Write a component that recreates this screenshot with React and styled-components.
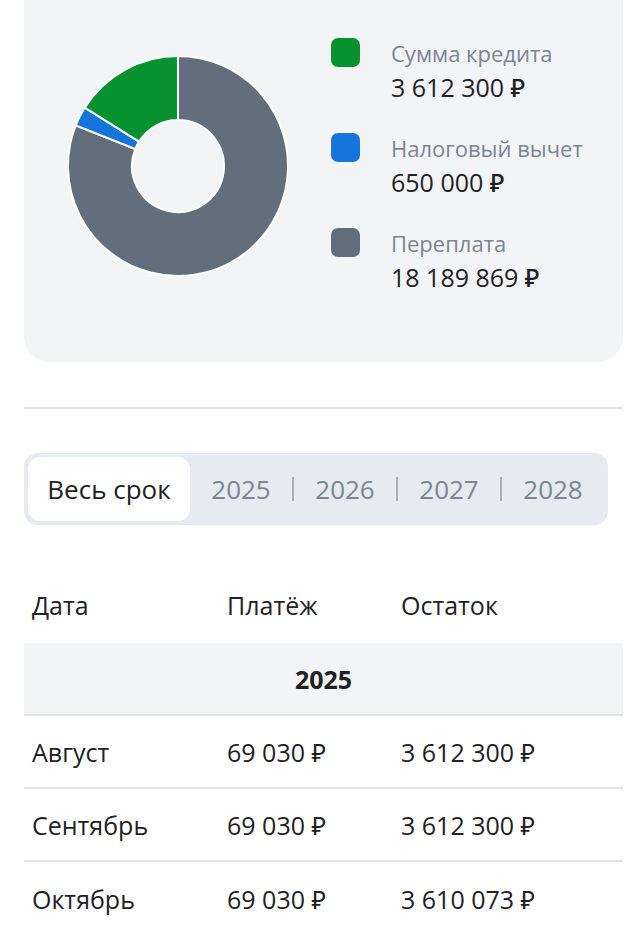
import React from "react";
import styled, { createGlobalStyle } from "styled-components";

const GlobalStyle = createGlobalStyle`
  html, body {
    margin: 0;
    padding: 0;
    background: #ffffff;
    font-family: "Open Sans", "Noto Sans", sans-serif;
    color: #1f2125;
  }
`;

const segments = [
  { label: "Сумма кредита", value: 3612300, color: "#07922f" },
  { label: "Налоговый вычет", value: 650000, color: "#1675dd" },
  { label: "Переплата", value: 18189869, color: "#636e7d" },
];

const rows = [
  { month: "Август", pay: "69 030 ₽", rest: "3 612 300 ₽" },
  { month: "Сентябрь", pay: "69 030 ₽", rest: "3 612 300 ₽" },
  { month: "Октябрь", pay: "69 030 ₽", rest: "3 610 073 ₽" },
];

const tabs = ["2025", "2026", "2027", "2028"];

const fmt = (n) => n.toString().replace(/\B(?=(\d{3})+(?!\d))/g, " ") + " ₽";

const Page = styled.div`
  padding: 0 17px 0 24px;
`;

const Card = styled.div`
  background: #f3f4f6;
  border-radius: 0 0 26px 26px;
  height: 362px;
  display: flex;
  align-items: flex-start;
  padding: 0 0 0 44px;
  box-sizing: border-box;
`;

const ChartBox = styled.div`
  width: 220px;
  height: 220px;
  margin-top: 56px;
  flex-shrink: 0;
`;

const Legend = styled.div`
  margin-left: 43px;
  margin-top: 38px;
  display: flex;
  flex-direction: column;
  gap: 27px;
`;

const LegendItem = styled.div`
  display: flex;
  gap: 31px;
`;

const Swatch = styled.div`
  width: 29px;
  height: 29px;
  border-radius: 7px;
  background: ${(p) => p.$color};
  flex-shrink: 0;
`;

const LegendText = styled.div`
  display: flex;
  flex-direction: column;
`;

const LegendLabel = styled.div`
  font-size: 22px;
  line-height: 30px;
  color: #7b8593;
`;

const LegendValue = styled.div`
  font-size: 25px;
  line-height: 38px;
  font-weight: 500;
  color: #1f2125;
`;

const Divider = styled.div`
  height: 2px;
  background: #dfe1e5;
  margin-top: 45px;
`;

const Tabs = styled.div`
  margin-top: 44px;
  width: 584px;
  height: 72px;
  box-sizing: border-box;
  padding: 4px;
  background: #e6ebf1;
  border-radius: 14px;
  display: flex;
  align-items: center;
`;

const ActiveTab = styled.div`
  width: 162px;
  height: 64px;
  background: #ffffff;
  border-radius: 12px;
  display: flex;
  align-items: center;
  justify-content: center;
  font-size: 26px;
  color: #1f2125;
`;

const Tab = styled.div`
  flex: 1;
  display: flex;
  align-items: center;
  justify-content: center;
  font-size: 26px;
  color: #7b8593;
  height: 100%;
  & + & {
    border-left: 2px solid #a7afb9;
    height: 24px;
  }
`;

const Table = styled.div`
  margin-top: 42px;
`;

const Row = styled.div`
  display: grid;
  grid-template-columns: 195px 174px 1fr;
  align-items: center;
  height: ${(p) => p.$h || 73}px;
  padding-left: 8px;
  font-size: 25px;
  font-weight: ${(p) => (p.$head ? 500 : 400)};
  border-bottom: ${(p) => (p.$line ? "2px solid #e1e3e6" : "none")};
  box-sizing: border-box;
`;

const YearRow = styled.div`
  height: 73px;
  background: #f3f4f6;
  border-bottom: 2px solid #e1e3e6;
  box-sizing: border-box;
  display: flex;
  align-items: center;
  justify-content: center;
  font-size: 25px;
  font-weight: 700;
`;

function polar(cx, cy, r, a) {
  const rad = ((a - 90) * Math.PI) / 180;
  return [cx + r * Math.cos(rad), cy + r * Math.sin(rad)];
}

function arcPath(cx, cy, r1, r2, a0, a1) {
  const large = a1 - a0 > 180 ? 1 : 0;
  const [x0, y0] = polar(cx, cy, r2, a0);
  const [x1, y1] = polar(cx, cy, r2, a1);
  const [x2, y2] = polar(cx, cy, r1, a1);
  const [x3, y3] = polar(cx, cy, r1, a0);
  return `M${x0} ${y0} A${r2} ${r2} 0 ${large} 1 ${x1} ${y1} L${x2} ${y2} A${r1} ${r1} 0 ${large} 0 ${x3} ${y3} Z`;
}

function Donut() {
  const total = segments.reduce((s, x) => s + x.value, 0);
  const order = [segments[2], segments[1], segments[0]];
  let a = 0;
  return (
    <svg width="220" height="220" viewBox="0 0 220 220">
      {order.map((s) => {
        const a0 = a;
        a += (s.value / total) * 360;
        return (
          <path
            key={s.label}
            d={arcPath(110, 110, 46, 110, a0, a)}
            fill={s.color}
            stroke="#ffffff"
            strokeWidth="2"
          />
        );
      })}
    </svg>
  );
}

export default function App() {
  return (
    <Page>
      <GlobalStyle />
      <Card>
        <ChartBox>
          <Donut />
        </ChartBox>
        <Legend>
          {segments.map((s) => (
            <LegendItem key={s.label}>
              <Swatch $color={s.color} />
              <LegendText>
                <LegendLabel>{s.label}</LegendLabel>
                <LegendValue>{fmt(s.value)}</LegendValue>
              </LegendText>
            </LegendItem>
          ))}
        </Legend>
      </Card>
      <Divider />
      <Tabs>
        <ActiveTab>Весь срок</ActiveTab>
        {tabs.map((t) => (
          <Tab key={t}>{t}</Tab>
        ))}
      </Tabs>
      <Table>
        <Row $head $h={76}>
          <span>Дата</span>
          <span>Платёж</span>
          <span>Остаток</span>
        </Row>
        <YearRow>2025</YearRow>
        {rows.map((r, i) => (
          <Row key={r.month} $line={i < rows.length - 1}>
            <span>{r.month}</span>
            <span>{r.pay}</span>
            <span>{r.rest}</span>
          </Row>
        ))}
      </Table>
    </Page>
  );
}
